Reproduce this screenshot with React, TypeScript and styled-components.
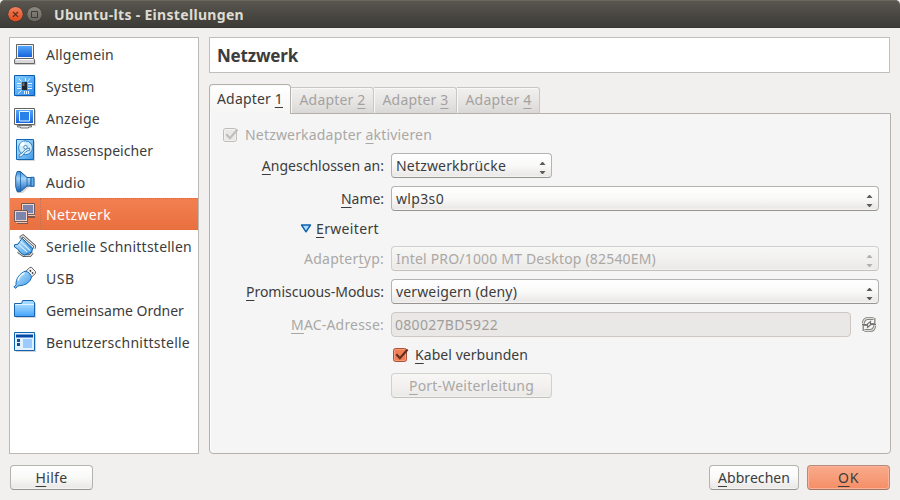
import React, { useLayoutEffect, useRef, useState } from "react";
import styled, { createGlobalStyle, css } from "styled-components";

const GlobalStyle = createGlobalStyle`
  * { box-sizing: border-box; }
  html, body { margin: 0; padding: 0; }
  body { background: #f1f0ee; overflow: hidden; }
`;

const Window = styled.div`
  width: 900px;
  height: 500px;
  display: flex;
  flex-direction: column;
  background: #f1f0ee;
  color: #3c3c3c;
  font-family: "Noto Sans", "Open Sans", sans-serif;
  font-size: 14px;
  line-height: 20px;
`;

const TitleBar = styled.header`
  flex: none;
  height: 28px;
  display: flex;
  align-items: center;
  padding-left: 7px;
  gap: 2px;
  border-radius: 5px 5px 0 0;
  background: linear-gradient(#5c5a52 0, #57554e 8%, #4a4842 50%, #3d3c37 96%, #35342f 100%);
  box-shadow: inset 0 1px #6a675e;
  color: #dfdbd2;
  font-weight: 700;
`;

const WindowTitle = styled.h1`
  margin: 0 0 0 9px;
  padding-top: 2px;
  font: inherit;
`;

const Body = styled.div`
  flex: 1;
  display: flex;
  gap: 10px;
  padding: 9px 9px 11px 9px;
`;

const CategoryList = styled.nav`
  width: 190px;
  height: 417px;
  border: 1px solid #bcbab7;
  background: #fff;
`;

const Category = styled.div<{ $active?: boolean }>`
  height: 32px;
  display: flex;
  align-items: center;
  ${(p) =>
    p.$active &&
    css`
      color: #fff;
      background: linear-gradient(#f37f50, #e9703f);
    `}
`;

const CategoryIcon = styled.svg`
  flex: none;
  width: 24px;
  height: 24px;
  margin: 0 7px 0 3px;
`;

const CategoryText = styled.span<{ $active?: boolean }>`
  flex: 1;
  height: 32px;
  display: flex;
  align-items: center;
  padding: 1px 0 0 2px;
  ${(p) =>
    p.$active &&
    css`
      margin-left: -4px;
      padding-left: 5px;
      border: 1px dotted #b5785f;
      border-right: 0;
    `}
`;

const Content = styled.main`
  flex: 1;
  height: 417px;
  display: flex;
  flex-direction: column;
`;

const PageTitle = styled.h2`
  height: 36px;
  margin: 0 1px 11px 0;
  padding: 2px 7px 0;
  display: flex;
  align-items: center;
  border: 1px solid #c1bfbc;
  background: #fff;
  font-size: 17px;
  font-weight: 700;
`;

const TabBar = styled.div`
  flex: none;
  height: 30px;
  display: flex;
  align-items: flex-end;
  margin-bottom: -1px;
  z-index: 1;
`;

const Tab = styled.div<{ $active?: boolean }>`
  display: flex;
  justify-content: center;
  align-items: center;
  border: 1px solid #c9c7c5;
  border-left-width: 0;
  border-radius: 0 3px 0 0;
  width: 83px;
  height: 27px;
  padding: 0 0 2px 1px;
  color: #a4a2a0;
  border-bottom-color: #b4b0ac;
  background: linear-gradient(#f1f0ef, #e8e6e5 50%, #dad8d6);
  box-shadow: inset 1px 1px #f8f8f7;
  ${(p) =>
    p.$active &&
    css`
      width: 82px;
      height: 30px;
      padding: 0 0 2px;
      color: #3c3c3c;
      border: 1px solid #b4b0ac;
      border-bottom: 0;
      border-radius: 4px 4px 0 0;
      background: linear-gradient(#fff, #f5f5f4);
    `}
`;

const Panel = styled.section`
  flex: 1;
  display: flex;
  flex-direction: column;
  border: 1px solid #b4b0ac;
  border-radius: 0 0 4px 4px;
  background: #f5f5f5;
  padding: 11px 11px 0 13px;
  box-shadow: inset 1px 0 #fcfcfc;
`;

const EnableRow = styled.div`
  height: 20px;
  display: flex;
  align-items: center;
  gap: 6px;
  margin: 0 0 8px -1px;
  color: #aaa8a5;
`;

const Form = styled.div`
  display: grid;
  grid-template-columns: 161px 1fr;
  column-gap: 7px;
  grid-template-rows: 25px 25px 19px 25px 25px 25px 20px 25px;
  row-gap: 8px;
`;

const FieldLabel = styled.label<{ $disabled?: boolean }>`
  display: flex;
  align-items: center;
  justify-content: flex-end;
  color: ${(p) => (p.$disabled ? "#aaa8a5" : "#3c3c3c")};
`;

const Advanced = styled.div`
  grid-column: 1 / -1;
  display: flex;
  align-items: center;
  gap: 4px;
  padding-left: 77px;
`;

const controlFace = css`
  height: 25px;
  display: flex;
  align-items: center;
  border: 1px solid #b5b3b0;
  border-bottom-color: #979592;
  border-radius: 4px;
  background: linear-gradient(#fff, #f9f9f8 50%, #ebe9e7 92%, #f7f6f5);
`;

const disabledFace = css`
  color: #aaa8a5;
  border-color: #d2d0ce;
  border-bottom-color: #c3c1be;
  background: linear-gradient(#f7f7f6, #f2f1f0 50%, #ebeae8 92%, #f4f3f2);
`;

const Combo = styled.div<{ $compact?: boolean; $disabled?: boolean }>`
  ${controlFace}
  width: ${(p) => (p.$compact ? "161px" : "488px")};
  justify-content: space-between;
  padding: 0 5px 0 4px;
  ${(p) => p.$disabled && disabledFace}
`;

const ArrowPair = styled.svg`
  width: 7px;
  height: 12px;
  margin-top: 4px;
`;

const MacRow = styled.div`
  display: flex;
  align-items: center;
  gap: 10px;
`;

const TextInput = styled.div`
  width: 460px;
  height: 25px;
  display: flex;
  align-items: center;
  padding: 0 3px;
  border: 1px solid #cdc8c4;
  border-radius: 4px;
  background: #eae8e7;
  color: #a09e9b;
`;

const CheckRow = styled.div`
  grid-column: 2;
  display: flex;
  align-items: center;
  gap: 6px;
  padding-left: 1px;
`;

const Button = styled.button<{ $width: number; $primary?: boolean }>`
  ${controlFace}
  width: ${(p) => p.$width}px;
  justify-content: center;
  padding: 0;
  color: #3c3c3c;
  font: inherit;
  &:disabled {
    ${disabledFace}
  }
  ${(p) =>
    p.$primary &&
    css`
      border-color: #b58a78;
      border-bottom-color: #a27562;
      background: linear-gradient(#f9aa8b, #f79d79 50%, #f48e66);
      box-shadow: inset 0 0 0 1px #fbb499;
    `}
`;

const PortButton = styled(Button)`
  grid-column: 2;
`;

const Footer = styled.footer`
  flex: none;
  display: flex;
  gap: 8px;
  height: 35px;
  padding: 0 10px;
`;

const Spacer = styled.div`
  flex: 1;
`;

const FitText = styled.span`
  display: inline-block;
  flex: none;
  white-space: nowrap;
`;

const Mnemonic = styled.span`
  text-decoration: underline;
  text-decoration-thickness: 1px;
  text-underline-offset: 3px;
  text-decoration-skip-ink: none;
`;

/** Text spaced to a set advance width; "&" marks the mnemonic letter. */
function Text({ children, w }: { children: string; w: number }) {
  const ref = useRef<HTMLSpanElement>(null);
  const [spacing, setSpacing] = useState(0);
  const at = children.indexOf("&");
  const length = children.length - (at >= 0 ? 1 : 0);
  useLayoutEffect(() => {
    if (ref.current) {
      const natural = ref.current.getBoundingClientRect().width - spacing * length;
      const next = (w - natural) / length;
      if (Math.abs(next - spacing) > 0.01) setSpacing(next);
    }
  });
  return (
    <FitText ref={ref} style={{ letterSpacing: spacing }}>
      {at < 0 ? (
        children
      ) : (
        <>
          {children.slice(0, at)}
          <Mnemonic>{children[at + 1]}</Mnemonic>
          {children.slice(at + 2)}
        </>
      )}
    </FitText>
  );
}

const Arrows = ({ disabled }: { disabled?: boolean }) => (
  <ArrowPair viewBox="0 0 7 12" fill={disabled ? "#b3b1af" : "#5e5c5a"}>
    <path d="M3 0h1l2.5 3h-6zM.5 9h6L4 12H3z" />
  </ArrowPair>
);

const CheckBox = ({ disabled }: { disabled?: boolean }) => (
  <svg width="17" height="17" viewBox="0 0 17 17">
    <rect x="1.5" y="1.5" width="13" height="13" rx="2" fill={disabled ? "#e9e8e6" : "#f27e54"} stroke={disabled ? "#bfbdbb" : "#a9543a"} />
    <rect x="2.5" y="2.5" width="11" height="11" rx="1" fill="none" stroke={disabled ? "#f3f2f1" : "#f79b79"} />
    <path d="M4.3 7.3l3.6 3.9L15.6 2.6" fill="none" stroke={disabled ? "#c0bebc" : "#5e3022"} strokeWidth="2.2" />
  </svg>
);

const CloseButton = () => (
  <svg width="17" height="18" viewBox="0 0 17 18">
    <circle cx="8.5" cy="9.4" r="7.8" fill="#393732" />
    <circle cx="8.5" cy="9.2" r="7.3" fill="url(#close)" />
    <path d="M6 6.8l5 5M11 6.8l-5 5" stroke="#54281b" strokeWidth="1.2" />
  </svg>
);

const MaximizeButton = () => (
  <svg width="17" height="18" viewBox="0 0 17 18">
    <circle cx="8.5" cy="9.4" r="7.8" fill="#393732" />
    <circle cx="8.5" cy="9.2" r="7.3" fill="url(#max)" />
    <path d="M5.5 6.5h6v6h-6z" fill="none" stroke="#3c3b37" />
  </svg>
);

const Gradients = () => (
  <defs>
    <linearGradient id="blue" x1="0" y1="0" x2="1" y2="1">
      <stop offset="0" stopColor="#8ad2ff" />
      <stop offset="1" stopColor="#2a86ec" />
    </linearGradient>
    <linearGradient id="horn" x1="0" y1="0" x2="0" y2="1">
      <stop offset="0" stopColor="#3d8bd2" />
      <stop offset=".35" stopColor="#a5d6fa" />
      <stop offset="1" stopColor="#1660b4" />
    </linearGradient>
    <linearGradient id="screen" x1="0" y1="0" x2="0" y2="1">
      <stop offset="0" stopColor="#54a7fa" />
      <stop offset="1" stopColor="#1664dd" />
    </linearGradient>
    <linearGradient id="pale" x1="0" y1="0" x2="1" y2="1">
      <stop offset="0" stopColor="#c9e9ff" />
      <stop offset="1" stopColor="#3b98e9" />
    </linearGradient>
    <linearGradient id="folder" x1="0" y1="0" x2="0" y2="1">
      <stop offset="0" stopColor="#aadcff" />
      <stop offset="1" stopColor="#45a5fa" />
    </linearGradient>
    <linearGradient id="close" x1="0" y1="0" x2="0" y2="1">
      <stop offset="0" stopColor="#f3815c" />
      <stop offset="1" stopColor="#de4a1c" />
    </linearGradient>
    <linearGradient id="max" x1="0" y1="0" x2="0" y2="1">
      <stop offset="0" stopColor="#8c8982" />
      <stop offset="1" stopColor="#67645d" />
    </linearGradient>
  </defs>
);

const GradientSource = styled.svg`
  position: absolute;
  width: 0;
  height: 0;
`;

const icons: Record<string, React.ReactNode> = {
  general: (
    <>
      <path d="M3.5 2.5h17v14h-17z" fill="#f2f2f2" stroke="#616161" />
      <path d="M5 4h14v11H5z" fill="url(#screen)" />
      <path d="M3 17.5h18.5l1 1.5v4H2v-3z" fill="#9c9c9c" opacity=".5" />
      <path d="M2.5 16.5h18.2l.8 1v4H1.6v-4z" fill="#d9d9d9" stroke="#666" />
      <path d="M3 17.5h17" stroke="#fff" />
    </>
  ),
  system: (
    <>
      <path d="M3 3h20v20H3z" fill="#999" opacity=".4" />
      <path d="M1.5 1.5h20v20h-20z" fill="url(#blue)" stroke="#075bb1" />
      <path d="M9 8h5v8H9z" fill="#23272e" />
      <path d="M9.5 8.5h2V12h-2z" fill="#68717b" />
      <path
        d="M4 9.5h4M4 12h4M4 14.5h4M15 9.5h4M15 12h4M15 14.5h4M6 5l2.5 2.5M12.5 4v3M17 4.5L14.5 7.5M5 19.5l3.5-3M11.5 17v3M13.5 17v3M15.5 17v3"
        stroke="#e4f5ff"
        fill="none"
      />
    </>
  ),
  display: (
    <>
      <path d="M3 4h20v16H3z" fill="#999" opacity=".4" />
      <path d="M1.5 2.5h20v16h-20z" fill="#fff" stroke="#616161" />
      <path d="M3 4h17v13H3z" fill="url(#screen)" />
      <path d="M6.5 5.5h10v9.5h-10z" fill="#2781e9" stroke="#e5f5ff" />
      <path d="M4.5 19.5h14v1.5h-3v1h-8v-1h-3z" fill="#e8e8e8" stroke="#727272" />
    </>
  ),
  storage: (
    <>
      <path d="M5 3h17v20H5z" fill="#999" opacity=".4" />
      <path d="M3.5 1.5h17v20h-17z" fill="url(#pale)" stroke="#1267b4" />
      <circle cx="12.5" cy="9.8" r="6.9" fill="#cfedff" stroke="#2c7fc5" />
      <path d="M12.5 9.8L6.5 7A7 7 0 0 1 11 3.3z" fill="#fff" opacity=".8" />
      <circle cx="12.5" cy="9.2" r="1.8" fill="#fff" stroke="#3f86bd" />
      <path d="M16.8 12.3c-3 .3-5.5 2.2-7.2 5.2l-3.2 2-.4-2.6 3-1.8c2-3 4.4-4.4 7.4-5z" fill="#edf9ff" stroke="#176bae" strokeWidth=".8" />
    </>
  ),
  audio: (
    <>
      <path d="M4 3l6 0 6 5h6v9h-6l-6 6H4z" fill="#aaa" opacity=".45" />
      <path d="M4.2 1.5h3.2l6.6 6h4.2v8.6H14l-6.6 5.6H4.2l-1.5-5V6.5z" fill="url(#horn)" stroke="#1960a8" />
      <path d="M7.5 1.8v19.6M14 7.5V16" stroke="#1d66ad" strokeWidth=".8" />
      <path d="M18 7.3h3v9h-3z" fill="#63afea" stroke="#1960a8" />
    </>
  ),
  network: (
    <>
      <path d="M11 13h11v3H13zM4 20.5h11V22H4z" fill="#83564d" />
      <path d="M8.5 1.5h13v11h-13z" fill="#f1d4c8" stroke="#715b5a" />
      <path d="M10 3h10v8H10z" fill="#7c85ae" />
      <path d="M15 13.5h7" stroke="#edc5b6" />
      <path d="M1.5 8.5h13v11h-13z" fill="#f1d4c8" stroke="#715b5a" />
      <path d="M3 10h10v8H3z" fill="#7c85ae" />
      <path d="M3 20.5h11" stroke="#edc5b6" />
    </>
  ),
  serial: (
    <>
      <path d="M8 4.5V3l2-1.2L21.5 12v2.5M5 17.5l5.5 4 6.5.2 2.5-3" stroke="#555" strokeWidth="2.8" fill="none" />
      <path d="M8 4.5V3l2-1.2L21.5 12v2.5M5 17.5l5.5 4 6.5.2 2.5-3" stroke="#eee" strokeWidth="1.1" fill="none" />
      <path d="M9 4.2L19.6 14l-.8 4-3.6 1.6-4 1.5-3.5-2.2-3.2-4L1.5 13v-2.2l3.6-.7z" fill="url(#pale)" stroke="#0f64aa" strokeLinejoin="round" />
      <path d="M7.5 7.5l9.5 9M5.5 10.5L14 18" stroke="#cbeaff" strokeWidth="1.2" />
      <path d="M9.5 6l9 8.4" stroke="#2a7fc8" strokeWidth=".8" />
    </>
  ),
  usb: (
    <>
      <path d="M12.7 5.5l4-4 1.8-.2 4 4.3v1.8l-4.3 4z" fill="#f4f4f4" stroke="#5e5e5e" />
      <path d="M16.8 4.3l1.2 1.2M19 6.4l1.2 1.2" stroke="#222" strokeWidth="1.4" />
      <path d="M12.2 5.2c3 .3 6 3 6.3 6.3-1.4 4-4.4 6.7-8.3 7.6l-5.6 1-2 2.3-1.5-1.5L3 18.8c-.3-6 3.500-11.300 9.200-13.600z" fill="url(#pale)" stroke="#1269b3" />
      <path d="M5 14.500c1-3.500 3.200-6 6.500-7.500" stroke="#eef9ff" strokeWidth="1.400" fill="none" />
    </>
  ),
  folders: (
    <>
      <path d="M3 5h20v15H3z" fill="#999" opacity=".4" />
      <path d="M1.500 18.500v-13h7l1.200-3h10.300l1.500 2v14z" fill="#a2d8ff" stroke="#1763ad" />
      <path d="M2 6h19v12H2z" fill="url(#folder)" />
      <path d="M2 6.500h19" stroke="#e0f3ff" />
    </>
  ),
  ui: (
    <>
      <path d="M3 4h20v18H3z" fill="#999" opacity=".45" />
      <path d="M1.500 2.500h20v18h-20z" fill="#e3f2ff" stroke="#1263af" />
      <path d="M3 4.500h17v3H3z" fill="#064aa7" />
      <path d="M4 9h3v3H4zM4 13h3v3H4z" fill="#124f96" />
      <path d="M10 9h9v9h-9z" fill="#9bcbff" />
    </>
  ),
};

const categories: { icon: string; label: string; width: number; active?: boolean }[] = [
  { icon: "general", label: "Allgemein", width: 68 },
  { icon: "system", label: "System", width: 48.5 },
  { icon: "display", label: "Anzeige", width: 54 },
  { icon: "storage", label: "Massenspeicher", width: 107 },
  { icon: "audio", label: "Audio", width: 39.5 },
  { icon: "network", label: "Netzwerk", width: 65, active: true },
  { icon: "serial", label: "Serielle Schnittstellen", width: 146 },
  { icon: "usb", label: "USB", width: 28.5 },
  { icon: "folders", label: "Gemeinsame Ordner", width: 138 },
  { icon: "ui", label: "Benutzerschnittstelle", width: 144 },
];

const tabs = ["Adapter &1", "Adapter &2", "Adapter &3", "Adapter &4"];

export default function App() {
  return (
    <>
      <GlobalStyle />
      <Window>
        <GradientSource>
          <Gradients />
        </GradientSource>
        <TitleBar>
          <CloseButton />
          <MaximizeButton />
          <WindowTitle>
            <Text w={190}>Ubuntu-lts - Einstellungen</Text>
          </WindowTitle>
        </TitleBar>
        <Body>
          <CategoryList>
            {categories.map((c) => (
              <Category key={c.icon} $active={c.active}>
                <CategoryIcon viewBox="0 0 24 24">{icons[c.icon]}</CategoryIcon>
                <CategoryText $active={c.active}>
                  <Text w={c.width}>{c.label}</Text>
                </CategoryText>
              </Category>
            ))}
          </CategoryList>
          <Content>
            <PageTitle>
              <Text w={81}>Netzwerk</Text>
            </PageTitle>
            <TabBar>
              {tabs.map((t, i) => (
                <Tab key={t} $active={i === 0}>
                  <Text w={66}>{t}</Text>
                </Tab>
              ))}
            </TabBar>
            <Panel>
              <EnableRow>
                <CheckBox disabled />
                <Text w={187}>Netzwerkadapter &aktivieren</Text>
              </EnableRow>
              <Form>
                <FieldLabel>
                  <Text w={122}>&Angeschlossen an:</Text>
                </FieldLabel>
                <Combo $compact>
                  <Text w={110}>Netzwerkbrücke</Text>
                  <Arrows />
                </Combo>
                <FieldLabel>
                  <Text w={43}>&Name:</Text>
                </FieldLabel>
                <Combo>
                  <Text w={48}>wlp3s0</Text>
                  <Arrows />
                </Combo>
                <Advanced>
                  <svg width="12" height="10" viewBox="0 0 12 10">
                    <path d="M1.500 1h9L6 7.800z" fill="#a9dcff" stroke="#0e60aa" strokeWidth="1.400" strokeLinejoin="round" />
                  </svg>
                  <Text w={63}>&Erweitert</Text>
                </Advanced>
                <FieldLabel $disabled>
                  <Text w={80}>Adapter&typ:</Text>
                </FieldLabel>
                <Combo $disabled>
                  <Text w={260}>Intel PRO/1000 MT Desktop (82540EM)</Text>
                  <Arrows disabled />
                </Combo>
                <FieldLabel>
                  <Text w={138}>&Promiscuous-Modus:</Text>
                </FieldLabel>
                <Combo>
                  <Text w={121}>verweigern (deny)</Text>
                  <Arrows />
                </Combo>
                <FieldLabel $disabled>
                  <Text w={93}>&MAC-Adresse:</Text>
                </FieldLabel>
                <MacRow>
                  <TextInput>
                    <Text w={103}>080027BD5922</Text>
                  </TextInput>
                  <svg width="16" height="17" viewBox="0 0 16 17" fill="none">
                    <path d="M2.300 7.500C2.600 4 4.500 2.500 7 2.400h5.500M13.700 9.500c-.3 3.500-2.200 5-4.700 5.100H3.500" stroke="#85837f" strokeWidth="3" />
                    <path d="M2.300 7.500C2.600 4 4.500 2.500 7 2.400h5.500M13.700 9.500c-.3 3.500-2.200 5-4.700 5.100H3.500" stroke="#dddcd9" strokeWidth="1.200" />
                    <path d="M13.800 2v5.700H9.200M2.200 15V9.300h4.600" stroke="#85837f" strokeWidth="1.300" />
                    <path d="M1 8.500h5l3.500-3v3H15M6.500 8.500v3l3.500-3" stroke="#777571" strokeWidth="1.200" />
                  </svg>
                </MacRow>
                <CheckRow>
                  <CheckBox />
                  <Text w={113}>&Kabel verbunden</Text>
                </CheckRow>
                <PortButton $width={161} disabled>
                  <Text w={125}>&Port-Weiterleitung</Text>
                </PortButton>
              </Form>
            </Panel>
          </Content>
        </Body>
        <Footer>
          <Button $width={83}>
            <Text w={32}>&Hilfe</Text>
          </Button>
          <Spacer />
          <Button $width={90}>
            <Text w={72}>&Abbrechen</Text>
          </Button>
          <Button $width={83} $primary>
            <Text w={21}>&OK</Text>
          </Button>
        </Footer>
      </Window>
    </>
  );
}
